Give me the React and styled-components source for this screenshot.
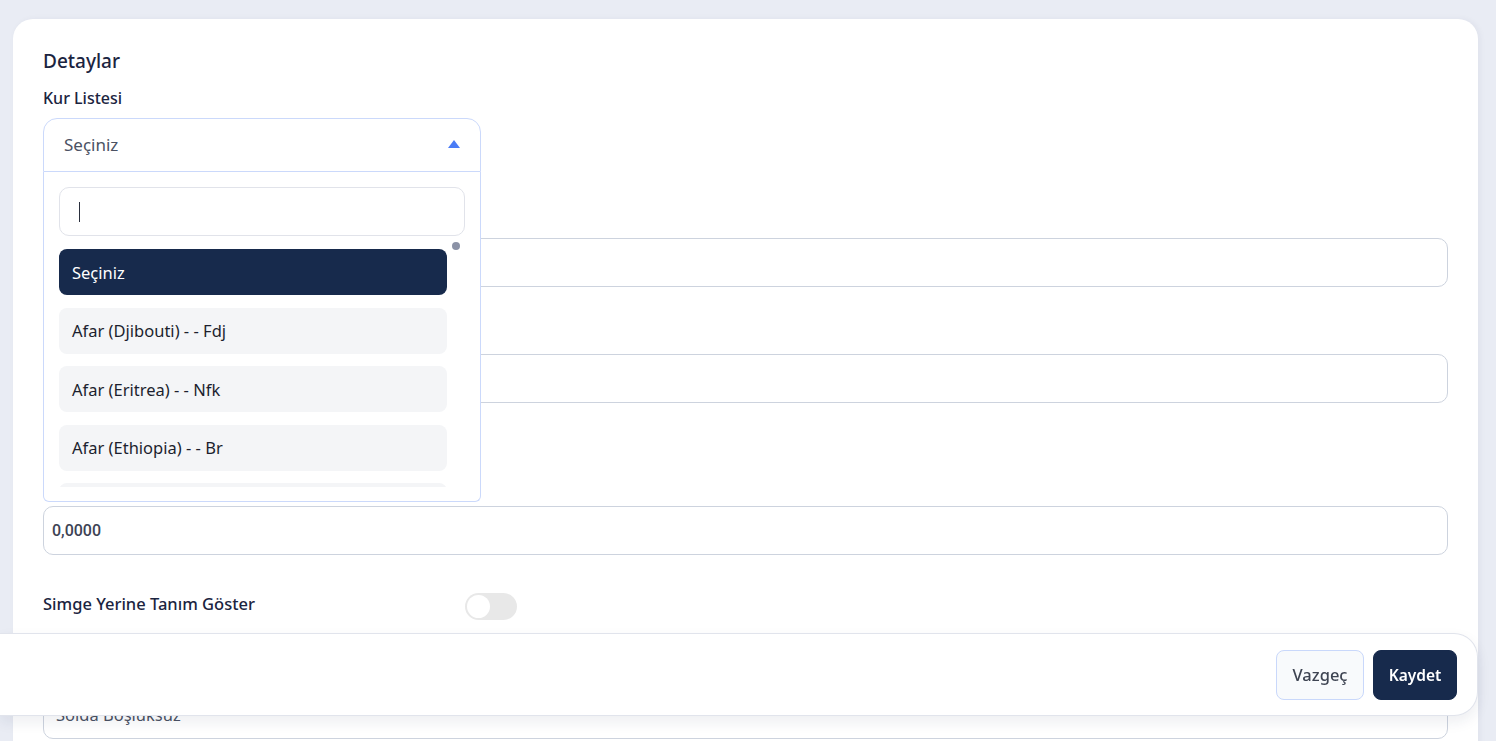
import React from "react";
import styled, { createGlobalStyle } from "styled-components";

const GlobalStyle = createGlobalStyle`
  html, body { margin: 0; padding: 0; }
  body {
    background: #e9ecf4;
    font-family: "Noto Sans", "Lato", sans-serif;
    color: #1b2440;
    overflow: hidden;
  }
  * { box-sizing: border-box; }
`;

const Page = styled.div`
  padding: 19px 18px 0 13px;
  min-height: 100vh;
`;

const Card = styled.div`
  background: #ffffff;
  border-radius: 20px 20px 0 0;
  padding: 30px 30px 120px 30px;
  box-shadow: 2px 0 6px rgba(30, 40, 80, 0.05);
`;

const Title = styled.h2`
  margin: 0 0 15px;
  font-size: 19px;
  line-height: 24px;
  font-weight: 500;
  color: #1b2440;
`;

const Field = styled.div`
  margin-top: ${(p) => p.$top ?? 37}px;
  &:first-of-type { margin-top: 0; }
`;

const Label = styled.div`
  font-size: 16px;
  line-height: 20px;
  font-weight: 500;
  color: #1b2440;
  margin-bottom: 10px;
`;

const TextInput = styled.div`
  height: 49px;
  border: 1px solid #cdd3de;
  border-radius: 10px;
  display: flex;
  align-items: center;
  padding: 0 ${(p) => (p.$plain ? 12 : 8)}px;
  font-family: ${(p) => (p.$plain ? `"Noto Sans", sans-serif` : `"Roboto", "Liberation Sans", sans-serif`)};
  font-size: ${(p) => (p.$plain ? 16.5 : 16)}px;
  font-weight: ${(p) => (p.$plain ? 400 : 500)};
  color: ${(p) => (p.$plain ? "#4b5263" : "#3d4354")};
`;

const SelectField = styled.div`
  position: relative;
  width: 438px;
  height: 53px;
  z-index: 5;
`;

const Dropdown = styled.div`
  position: absolute;
  top: 0;
  left: 0;
  width: 100%;
  background: #fff;
`;

const SelectHead = styled.div`
  height: 54px;
  border: 1px solid #cbd9fb;
  border-radius: 14px 14px 0 0;
  display: flex;
  align-items: center;
  justify-content: space-between;
  padding: 0 20px 2px 20px;
  font-size: 17px;
  color: #4b5263;
`;

const Arrow = styled.span`
  width: 0;
  height: 0;
  border-left: 6.5px solid transparent;
  border-right: 6.5px solid transparent;
  border-bottom: 8px solid #4a7cf6;
`;

const Panel = styled.div`
  border: 1px solid #cbd9fb;
  border-top: none;
  border-radius: 0 0 6px 6px;
  padding: 15px 15px 14px;
`;

const SearchBox = styled.div`
  position: relative;
  height: 49px;
  border: 1px solid #e1e3ea;
  border-radius: 10px;
`;

const Caret = styled.span`
  position: absolute;
  left: 19px;
  top: 14px;
  width: 1px;
  height: 20px;
  background: #2a2f3d;
`;

const ListWrap = styled.div`
  position: relative;
  margin-top: 6px;
`;

const List = styled.div`
  height: 245px;
  overflow: hidden;
  padding: 7px 18px 0 0;
  display: flex;
  flex-direction: column;
  gap: 12.5px;
`;

const Thumb = styled.span`
  position: absolute;
  right: 5px;
  top: 0;
  width: 8px;
  height: 8px;
  border-radius: 4px;
  background: #8b92a6;
`;

const Option = styled.div`
  flex: 0 0 46px;
  border-radius: 8px;
  display: flex;
  align-items: center;
  padding-left: 13px;
  font-size: 16.5px;
  background: ${(p) => (p.$active ? "#172a4c" : "#f4f5f7")};
  color: ${(p) => (p.$active ? "#ffffff" : "#1c1f2e")};
`;

const ToggleRow = styled.div`
  margin-top: 38px;
  display: grid;
  grid-template-columns: 422px auto;
  align-items: center;
  height: 27px;
`;

const ToggleLabel = styled.span`
  font-size: 16.5px;
  font-weight: 500;
  color: #1b2440;
  margin-top: -6px;
`;

const Switch = styled.span`
  position: relative;
  width: 52px;
  height: 27px;
  border-radius: 14px;
  background: #e8e8e8;
`;

const Knob = styled.span`
  position: absolute;
  left: 2px;
  top: 2px;
  width: 23px;
  height: 23px;
  border-radius: 50%;
  background: #fff;
`;

const Footer = styled.div`
  position: fixed;
  left: 0;
  right: 18px;
  bottom: 25px;
  height: 83px;
  background: #fff;
  border: 1px solid #e1e4ec;
  border-left: none;
  border-radius: 0 24px 24px 0;
  box-shadow: 0 6px 14px rgba(30, 40, 80, 0.08);
  display: flex;
  align-items: center;
  justify-content: flex-end;
  gap: 9px;
  padding-right: 20px;
  z-index: 10;
`;

const Button = styled.button`
  height: 50px;
  width: ${(p) => (p.$primary ? 84 : 88)}px;
  padding: 0;
  border-radius: 8px;
  font-family: inherit;
  font-size: ${(p) => (p.$primary ? 15.5 : 16.5)}px;
  font-weight: ${(p) => (p.$primary ? 600 : 500)};
  border: 1px solid ${(p) => (p.$primary ? "#172a4c" : "#c9d8fb")};
  background: ${(p) => (p.$primary ? "#172a4c" : "#f8fafc")};
  color: ${(p) => (p.$primary ? "#ffffff" : "#3e4452")};
  cursor: pointer;
`;

const options = [
  "Seçiniz",
  "Afar (Djibouti) - - Fdj",
  "Afar (Eritrea) - - Nfk",
  "Afar (Ethiopia) - - Br",
  "Afrikaans (Namibia) - - $",
  "Afrikaans (South Africa) - - R",
];

export default function App() {
  return (
    <>
      <GlobalStyle />
      <Page>
        <Card>
          <Title>Detaylar</Title>
          <Field>
            <Label>Kur Listesi</Label>
            <SelectField>
              <Dropdown>
                <SelectHead>
                  Seçiniz
                  <Arrow />
                </SelectHead>
                <Panel>
                  <SearchBox>
                    <Caret />
                  </SearchBox>
                  <ListWrap>
                    <List>
                      {options.map((o, i) => (
                        <Option key={o} $active={i === 0}>
                          {o}
                        </Option>
                      ))}
                    </List>
                    <Thumb />
                  </ListWrap>
                </Panel>
              </Dropdown>
            </SelectField>
          </Field>
          <Field>
            <Label>Kur Kodu</Label>
            <TextInput />
          </Field>
          <Field>
            <Label>Kur Simgesi</Label>
            <TextInput />
          </Field>
          <Field $top={73}>
            <Label>Kur Değeri</Label>
            <TextInput>0,0000</TextInput>
          </Field>
          <ToggleRow>
            <ToggleLabel>Simge Yerine Tanım Göster</ToggleLabel>
            <Switch>
              <Knob />
            </Switch>
          </ToggleRow>
          <Field $top={40}>
            <Label>Simge Konumu</Label>
            <TextInput $plain>Solda Boşluksuz</TextInput>
          </Field>
          <Field>
            <Label>Ondalık Ayracı</Label>
            <TextInput />
          </Field>
        </Card>
      </Page>
      <Footer>
        <Button>Vazgeç</Button>
        <Button $primary>Kaydet</Button>
      </Footer>
    </>
  );
}
